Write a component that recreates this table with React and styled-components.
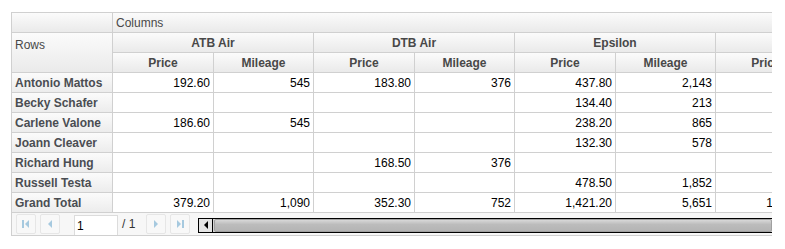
import React from 'react';
import styled, { createGlobalStyle } from 'styled-components';

const GlobalStyle = createGlobalStyle`
  html, body {
    margin: 0;
    padding: 0;
    background: #ffffff;
    font-family: "Liberation Sans", Arial, sans-serif;
    font-size: 12px;
  }
`;

const groups = ['ATB Air', 'DTB Air', 'Epsilon', 'Falcon Air'];

const rows = [
  { name: 'Antonio Mattos', values: ['192.60', '545', '183.80', '376', '437.80', '2,143', '', ''] },
  { name: 'Becky Schafer', values: ['', '', '', '', '134.40', '213', '', ''] },
  { name: 'Carlene Valone', values: ['186.60', '545', '', '', '238.20', '865', '', ''] },
  { name: 'Joann Cleaver', values: ['', '', '', '', '132.30', '578', '', ''] },
  { name: 'Richard Hung', values: ['', '', '168.50', '376', '', '', '', ''] },
  { name: 'Russell Testa', values: ['', '', '', '', '478.50', '1,852', '', ''] },
];

const total = ['379.20', '1,090', '352.30', '752', '1,421.20', '5,651', '1,067.40', '3,214'];

const Page = styled.div`
  padding: 12px 0 0 11px;
`;

const Grid = styled.div`
  width: 761px;
  overflow: hidden;
`;

const Viewport = styled.div`
  border-left: 1px solid #d0d0d0;
  border-top: 1px solid #d0d0d0;
  overflow: hidden;
`;

const Table = styled.table`
  border-collapse: separate;
  border-spacing: 0;
  table-layout: fixed;
  width: 905px;
`;

const HeadCell = styled.th`
  height: ${(p) => (p.$valign === 'top' ? 36 : 18)}px;
  padding: ${(p) => (p.$valign === 'top' ? '3px 3px 0' : '1px 3px 0')};
  border-right: 1px solid #d0d0d0;
  border-bottom: 1px solid #d0d0d0;
  background: linear-gradient(to bottom, #fbfbfb, #eaeaea);
  color: #484848;
  font-weight: ${(p) => (p.$plain ? 'normal' : 'bold')};
  text-align: ${(p) => p.$align || 'center'};
  vertical-align: ${(p) => p.$valign || 'middle'};
  white-space: nowrap;
  overflow: hidden;
  line-height: 18px;
`;

const NameCell = styled.th`
  height: 18px;
  padding: 1px 3px 0;
  border-right: 1px solid #d0d0d0;
  border-bottom: 1px solid #d0d0d0;
  background: linear-gradient(to bottom, #fbfbfb, #ececec);
  color: #4a4d52;
  font-weight: bold;
  text-align: left;
  white-space: nowrap;
  overflow: hidden;
`;

const ValueCell = styled.td`
  height: 18px;
  padding: 1px 3px 0;
  border-right: 1px solid #d0d0d0;
  border-bottom: 1px solid #d0d0d0;
  color: #000;
  text-align: right;
  white-space: nowrap;
  overflow: hidden;
`;

const Toolbar = styled.div`
  display: flex;
  align-items: center;
  height: 22px;
  border-left: 1px solid #d0d0d0;
  border-bottom: 1px solid #d0d0d0;
  background: #f7f7f7;
  padding-left: 4px;
`;

const PageButton = styled.div`
  width: 18px;
  height: 18px;
  margin-right: ${(p) => p.$gap ?? 4}px;
  border: 1px solid #e6e6e6;
  border-radius: 2px;
  background: #f8f8f8;
  display: flex;
  align-items: center;
  justify-content: center;
`;

const PageInput = styled.input`
  box-sizing: border-box;
  width: 44px;
  height: 20px;
  align-self: flex-end;
  margin-left: 14px;
  border: 1px solid #dcdcdc;
  border-bottom: none;
  padding: 0 2px;
  font: 12px "Liberation Sans", Arial, sans-serif;
  color: #000;
  background: #fff;
  outline: none;
`;

const PageCount = styled.span`
  color: #333;
  margin: 0 11px 0 4px;
  white-space: nowrap;
`;

const Scrollbar = styled.div`
  flex: 1;
  display: flex;
  height: 13px;
  margin-left: 8px;
  margin-top: 2px;
  border-top: 1px solid #000;
  border-bottom: 1px solid #000;
  border-left: 1px solid #000;
  background: #d4d4d4;
`;

const ScrollArrow = styled.div`
  width: 13px;
  display: flex;
  align-items: center;
  justify-content: center;
  background: #e4e4e4;
  border-right: 1px solid #000;
`;

const ScrollThumb = styled.div`
  flex: 1;
  margin: 0 0 0 1px;
  border-radius: 2px;
  border: 1px solid #a0a0a0;
  background: linear-gradient(to bottom, #d8d8d8, #bcbcbc 40%, #b4b4b4);
`;

const Tri = ({ dir, bar }) => (
  <svg width="10" height="10" viewBox="0 0 10 10">
    {dir === 'left' ? (
      <>
        {bar && <rect x="1" y="1" width="2" height="8" fill="#a6c9df" />}
        <path d={bar ? 'M8 1 L4 5 L8 9 Z' : 'M7 1 L3 5 L7 9 Z'} fill="#a6c9df" />
      </>
    ) : (
      <>
        <path d={bar ? 'M2 1 L6 5 L2 9 Z' : 'M3 1 L7 5 L3 9 Z'} fill="#a6c9df" />
        {bar && <rect x="7" y="1" width="2" height="8" fill="#a6c9df" />}
      </>
    )}
  </svg>
);

const widths = [101, 100, 101, 100, 101, 100, 101, 100];

export default function App() {
  return (
    <>
      <GlobalStyle />
      <Page>
        <Grid>
          <Viewport>
            <Table>
              <colgroup>
                <col style={{ width: 101 }} />
                {widths.map((w, i) => (
                  <col key={i} style={{ width: w }} />
                ))}
              </colgroup>
              <thead>
                <tr>
                  <HeadCell />
                  <HeadCell colSpan={8} $plain $align="left">Columns</HeadCell>
                </tr>
                <tr>
                  <HeadCell rowSpan={2} $plain $align="left" $valign="top">Rows</HeadCell>
                  {groups.map((g) => (
                    <HeadCell key={g} colSpan={2}>{g}</HeadCell>
                  ))}
                </tr>
                <tr>
                  {groups.map((g) => (
                    <React.Fragment key={g}>
                      <HeadCell>Price</HeadCell>
                      <HeadCell>Mileage</HeadCell>
                    </React.Fragment>
                  ))}
                </tr>
              </thead>
              <tbody>
                {rows.map((r) => (
                  <tr key={r.name}>
                    <NameCell>{r.name}</NameCell>
                    {r.values.map((v, i) => (
                      <ValueCell key={i}>{v}</ValueCell>
                    ))}
                  </tr>
                ))}
                <tr>
                  <NameCell>Grand Total</NameCell>
                  {total.map((v, i) => (
                    <ValueCell key={i}>{v}</ValueCell>
                  ))}
                </tr>
              </tbody>
            </Table>
          </Viewport>
          <Toolbar>
            <PageButton><Tri dir="left" bar /></PageButton>
            <PageButton $gap={0}><Tri dir="left" /></PageButton>
            <PageInput defaultValue="1" />
            <PageCount>/ 1</PageCount>
            <PageButton><Tri dir="right" /></PageButton>
            <PageButton $gap={0}><Tri dir="right" bar /></PageButton>
            <Scrollbar>
              <ScrollArrow>
                <svg width="6" height="8" viewBox="0 0 6 8">
                  <path d="M5 0 L1 4 L5 8 Z" fill="#000" />
                </svg>
              </ScrollArrow>
              <ScrollThumb />
            </Scrollbar>
          </Toolbar>
        </Grid>
      </Page>
    </>
  );
}
